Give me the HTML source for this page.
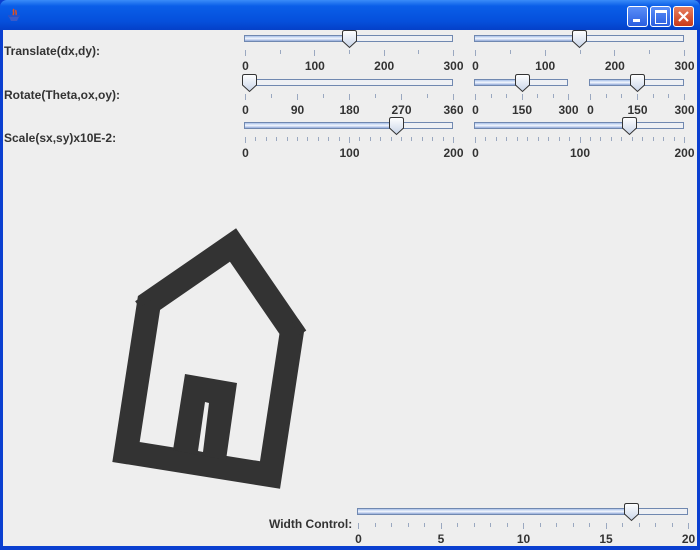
<!DOCTYPE html>
<html><head><style>
body{margin:0;width:700px;height:550px;overflow:hidden;background:#0a3fd0;font-family:"Liberation Sans",sans-serif;}
#title{position:absolute;left:0;top:0;width:700px;height:30px;background:linear-gradient(#3a8cf8,#0a5ee8 20%,#0550dc 70%,#0440c8);border-radius:7px 7px 0 0;}
#client{position:absolute;left:3px;top:30px;width:694px;height:516px;background:#eeeeee;}
.lbl{position:absolute;font-size:12px;font-weight:bold;color:#333;white-space:nowrap;}
.track{position:absolute;height:5px;border:1px solid #7088b0;background:#eef0f4;}
.fill{position:absolute;left:0;top:0;height:5px;background:linear-gradient(#a8c0e8,#f4f8ff 50%,#90a8d8);}
.tick{position:absolute;width:1px;background:#9aa8c0;}
.num{position:absolute;font-size:12px;font-weight:bold;color:#333;transform:translateX(-50%);}
.btn{position:absolute;top:6px;width:21px;height:21px;border:1px solid #fff;border-radius:3px;box-sizing:border-box;}
</style></head><body>
<div id="title">
<svg style="position:absolute;left:6px;top:7px" width="16" height="16"><path d="M3 10h10l-2 4H5z" fill="#3a5ac8"/><path d="M2 9h12" stroke="#3050c0" stroke-width="1.5"/><path d="M8 2c-2 2 1 3-1 6M10 3c-1 2 1 2 0 5" stroke="#e05020" stroke-width="1.5" fill="none"/></svg>
<div class="btn" style="left:627px;background:linear-gradient(#5a8ef8,#2a5ee0)"><div style="position:absolute;left:5px;top:12px;width:7px;height:3px;background:#fff"></div></div>
<div class="btn" style="left:650px;background:linear-gradient(#5a8ef8,#2a5ee0)"><div style="position:absolute;left:4px;top:3px;width:10px;height:10px;border:1px solid #fff;border-top-width:3px"></div></div>
<div class="btn" style="left:673px;background:linear-gradient(#e88060,#c83818)"><svg width="19" height="19" style="position:absolute;left:0;top:0"><path d="M5 5l9 9M14 5l-9 9" stroke="#fff" stroke-width="2.2"/></svg></div>
</div>
<div id="client">
<svg width="694" height="516" style="position:absolute;left:-3px;top:-30px">
<path d="M233 245L292 331L270 475L126 452L149 303Z" fill="none" stroke="#333" stroke-width="24" stroke-linejoin="miter"/>
<rect x="136" y="296" width="16" height="8" fill="#333" transform="rotate(-35 144 300)"/>
<rect x="292" y="323" width="14" height="8" fill="#333" transform="rotate(55 299 327)"/>
<path fill-rule="evenodd" fill="#333" d="M185 374L237 383L226 460L173 450Z M205 402L209 403L203 452L198 451Z"/>
</svg>
</div>
<div id="ov"></div>
<script>
var ov=document.getElementById('ov'),h='';
function lbl(x,y,t){h+='<div class="lbl" style="left:'+x+'px;top:'+y+'px">'+t+'</div>';}
function slider(x0,x1,ty,th,labels,nmin){
 h+='<div class="track" style="left:'+x0+'px;top:'+ty+'px;width:'+(x1-x0-2)+'px"><div class="fill" style="width:'+(th-x0)+'px"></div></div>';
 h+='<svg style="position:absolute;left:'+(th-8)+'px;top:'+(ty-6)+'px" width="17" height="20"><path d="M1.5 3.5q0-2 2-2h10q2 0 2 2v8.5l-7 6.5l-7-6.5z" fill="url(#g)" stroke="#333" stroke-width="1"/><defs><linearGradient id="g" x1="0" y1="0" x2="0" y2="1"><stop offset="0" stop-color="#fff"/><stop offset="1" stop-color="#c8d4e8"/></linearGradient></defs></svg>';
 var w=x1-x0-1;
 for(var i=0;i<=nmin;i++){var x=x0+1+w*i/nmin;h+='<div class="tick" style="left:'+Math.round(x)+'px;top:'+(ty+15)+'px;height:4px"></div>';}
 for(var i=0;i<labels.length;i++){var x=x0+1+w*i/(labels.length-1);h+='<div class="tick" style="left:'+Math.round(x)+'px;top:'+(ty+15)+'px;height:6px"></div><div class="num" style="left:'+(x+0.5)+'px;top:'+(ty+24)+'px">'+labels[i]+'</div>';}
}
lbl(4,44,'Translate(dx,dy):');lbl(4,88,'Rotate(Theta,ox,oy):');lbl(4,131,'Scale(sx,sy)x10E-2:');lbl(269,517,'Width Control:');
slider(244,453,35,349,[0,100,200,300],6);
slider(474,684,35,579,[0,100,200,300],6);
slider(244,453,79,249,[0,90,180,270,360],8);
slider(474,568,79,522,[0,150,300],6);
slider(589,684,79,637,[0,150,300],6);
slider(244,453,122,396,[0,100,200],20);
slider(474,684,122,629,[0,100,200],20);
slider(357,688,508,631,[0,5,10,15,20],20);
ov.innerHTML=h;
</script>
</body></html>
